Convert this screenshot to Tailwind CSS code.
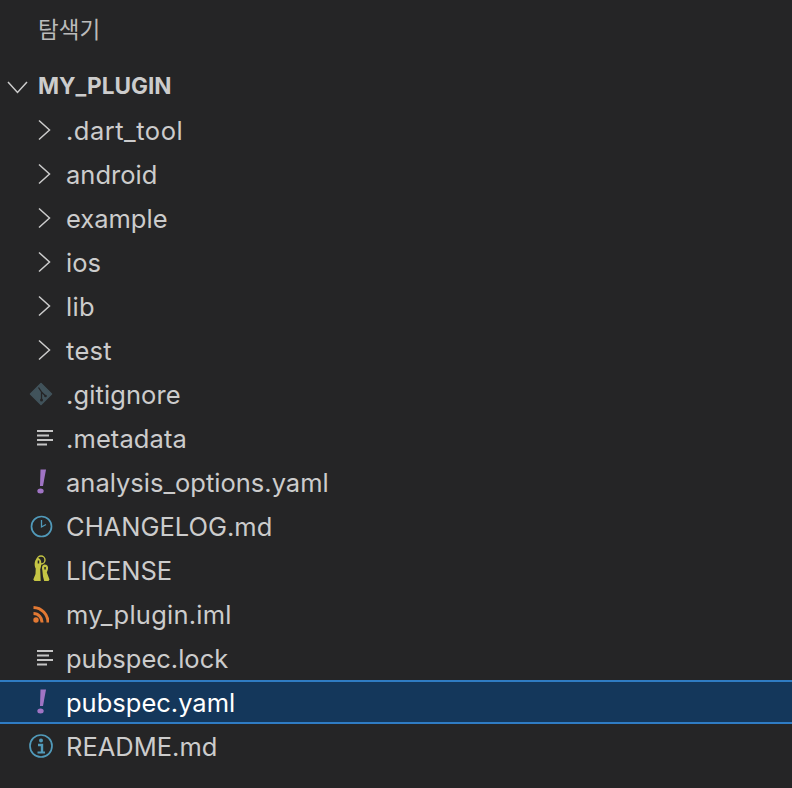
<!DOCTYPE html>
<html><head><meta charset="utf-8"><script src="https://cdn.jsdelivr.net/npm/@tailwindcss/browser@4"></script></head>
<body class="m-0 bg-[#252526]">
<div class="w-[792px] h-[788px] overflow-hidden bg-[#252526] text-[#cccccc] font-['Inter','Noto_Sans_CJK_KR',sans-serif] text-[25.5px]">
  <div class="h-[64px] pl-[38px] pt-[14px] text-[22.5px] leading-[32px] text-[#bbbbbb]">탐색기</div>
  <div class="h-[44px] flex items-center">
    <svg class="ml-[7px] w-[22px] h-[22px]" viewBox="0 0 22 22" fill="none" stroke="#cccccc" stroke-width="1.5"><path d="M1 7l9.500 10.500L20 7"/></svg>
    <span class="ml-[9px] font-bold text-[22.6px]">MY_PLUGIN</span>
  </div>
  <div class="h-[44px] flex items-center pl-[36px]"><svg class="w-[16px] h-[22px]" viewBox="0 0 16 22" fill="none" stroke="#cccccc" stroke-width="1.5"><path d="M3 1.500L13.500 11 3 20.500"/></svg><span class="ml-[14px] pt-[2px] tracking-[0.5px]">.dart_tool</span></div>
  <div class="h-[44px] flex items-center pl-[36px]"><svg class="w-[16px] h-[22px]" viewBox="0 0 16 22" fill="none" stroke="#cccccc" stroke-width="1.5"><path d="M3 1.500L13.500 11 3 20.500"/></svg><span class="ml-[14px] pt-[2px]">android</span></div>
  <div class="h-[44px] flex items-center pl-[36px]"><svg class="w-[16px] h-[22px]" viewBox="0 0 16 22" fill="none" stroke="#cccccc" stroke-width="1.5"><path d="M3 1.500L13.500 11 3 20.500"/></svg><span class="ml-[14px] pt-[2px]">example</span></div>
  <div class="h-[44px] flex items-center pl-[36px]"><svg class="w-[16px] h-[22px]" viewBox="0 0 16 22" fill="none" stroke="#cccccc" stroke-width="1.5"><path d="M3 1.500L13.500 11 3 20.500"/></svg><span class="ml-[14px] pt-[2px]">ios</span></div>
  <div class="h-[44px] flex items-center pl-[36px]"><svg class="w-[16px] h-[22px]" viewBox="0 0 16 22" fill="none" stroke="#cccccc" stroke-width="1.5"><path d="M3 1.500L13.500 11 3 20.500"/></svg><span class="ml-[14px] pt-[2px] tracking-[0.3px]">lib</span></div>
  <div class="h-[44px] flex items-center pl-[36px]"><svg class="w-[16px] h-[22px]" viewBox="0 0 16 22" fill="none" stroke="#cccccc" stroke-width="1.5"><path d="M3 1.500L13.500 11 3 20.500"/></svg><span class="ml-[14px] pt-[2px] tracking-[0.3px]">test</span></div>
  <div class="h-[44px] flex items-center pl-[29px]"><svg class="w-[24px] h-[24px]" viewBox="0 0 24 24"><path fill="#41535b" stroke="#41535b" stroke-width="1.500" stroke-linejoin="round" d="M12 1.500L22.500 12 12 22.500 1.500 12z"/><path fill="none" stroke="#252526" stroke-width="1.300" d="M9.500 5.500L12.500 10V18.500M12.500 10L16.500 14"/><circle cx="12.500" cy="18" r="1.500" fill="#252526"/><circle cx="16.500" cy="14" r="1.300" fill="#252526"/></svg><span class="ml-[13px] pt-[2px] tracking-[0.1px]">.gitignore</span></div>
  <div class="h-[44px] flex items-center pl-[36px]"><svg class="w-[18px] h-[18px]" viewBox="0 0 18 18" fill="#c5c5c5"><rect x="1" y="1" width="16" height="2"/><rect x="1" y="5.500" width="12" height="2"/><rect x="1" y="10" width="16" height="2"/><rect x="1" y="14.500" width="10" height="2"/></svg><span class="ml-[12px] pt-[2px] tracking-[0.1px]">.metadata</span></div>
  <div class="h-[44px] flex items-center pl-[36px]"><svg class="w-[12px] h-[26px] mr-[18px]" viewBox="0 0 12 26" fill="#a074c4"><path d="M4.500 0.500H10L7 17H4z"/><ellipse cx="4.500" cy="22" rx="3.200" ry="2.500"/></svg><span class="pt-[2px]">analysis_options.yaml</span></div>
  <div class="h-[44px] flex items-center pl-[30px]"><svg class="w-[23px] h-[23px]" viewBox="0 0 23 23" fill="none" stroke="#519aba" stroke-width="1.700"><circle cx="11.500" cy="11.500" r="10"/><path stroke-width="1.300" d="M11.500 5v7l4.500-2.500"/></svg><span class="ml-[13px] pt-[2px]">CHANGELOG.md</span></div>
  <div class="h-[44px] flex items-center pl-[32px]"><svg class="w-[20px] h-[30px]" viewBox="0 0 20 30" fill="#c5c544"><circle cx="9" cy="5" r="4" fill="none" stroke="#c5c544" stroke-width="1.400"/><path d="M5.500 3C8 3 9.500 5.500 9.300 9 9.200 11 8.600 13 8.200 14.500L8.700 26H2.500L1.300 24.500 3.500 19 3.700 13.500C2.300 11.500 1.800 5 5.500 3z"/><path d="M12.500 9.500C15.200 9.500 16.500 11.500 16 14 15.700 15.500 15 16.500 14.800 17.500L17.500 24.500 16.500 26H12.200L11 21.500 10.300 15C9.700 12.500 10 10 12.500 9.500z"/><path fill="#252526" d="M5.700 5.500h1.500v3h-1.500zM12.300 12h1.500v2.500h-1.500z"/></svg><span class="ml-[14px] pt-[2px]">LICENSE</span></div>
  <div class="h-[44px] flex items-center pl-[33px]"><svg class="w-[16px] h-[17px]" viewBox="0 0 16 17" fill="none" stroke="#e37933" stroke-width="3"><circle cx="3" cy="14" r="2.700" fill="#e37933" stroke="none"/><path d="M0.500 7.500a8.500 8.500 0 0 1 8.500 9M0.500 1.500a15 15 0 0 1 14.500 15"/></svg><span class="ml-[17px] pt-[2px] tracking-[0.25px]">my_plugin.iml</span></div>
  <div class="h-[44px] flex items-center pl-[36px]"><svg class="w-[18px] h-[18px]" viewBox="0 0 18 18" fill="#c5c5c5"><rect x="1" y="1" width="16" height="2"/><rect x="1" y="5.500" width="12" height="2"/><rect x="1" y="10" width="16" height="2"/><rect x="1" y="14.500" width="10" height="2"/></svg><span class="ml-[12px] pt-[2px]">pubspec.lock</span></div>
  <div class="h-[44px] flex items-center pl-[36px] bg-[#14375b] border-y-2 border-[#2f7cc4] text-white"><svg class="w-[12px] h-[26px] mr-[18px]" viewBox="0 0 12 26" fill="#a074c4"><path d="M4.500 0.500H10L7 17H4z"/><ellipse cx="4.500" cy="22" rx="3.200" ry="2.500"/></svg><span class="pt-[2px]">pubspec.yaml</span></div>
  <div class="h-[44px] flex items-center pl-[29px]"><svg class="w-[24px] h-[24px]" viewBox="0 0 24 24" fill="none" stroke="#519aba" stroke-width="1.700"><circle cx="12" cy="12" r="11"/><circle cx="12" cy="6.500" r="2" fill="#519aba" stroke="none"/><path stroke-width="2.400" d="M9 11h4v7.500"/><path stroke-width="2" d="M8.500 18.500h7.500"/></svg><span class="ml-[13px] pt-[2px]">README.md</span></div>
</div>
</body></html>
